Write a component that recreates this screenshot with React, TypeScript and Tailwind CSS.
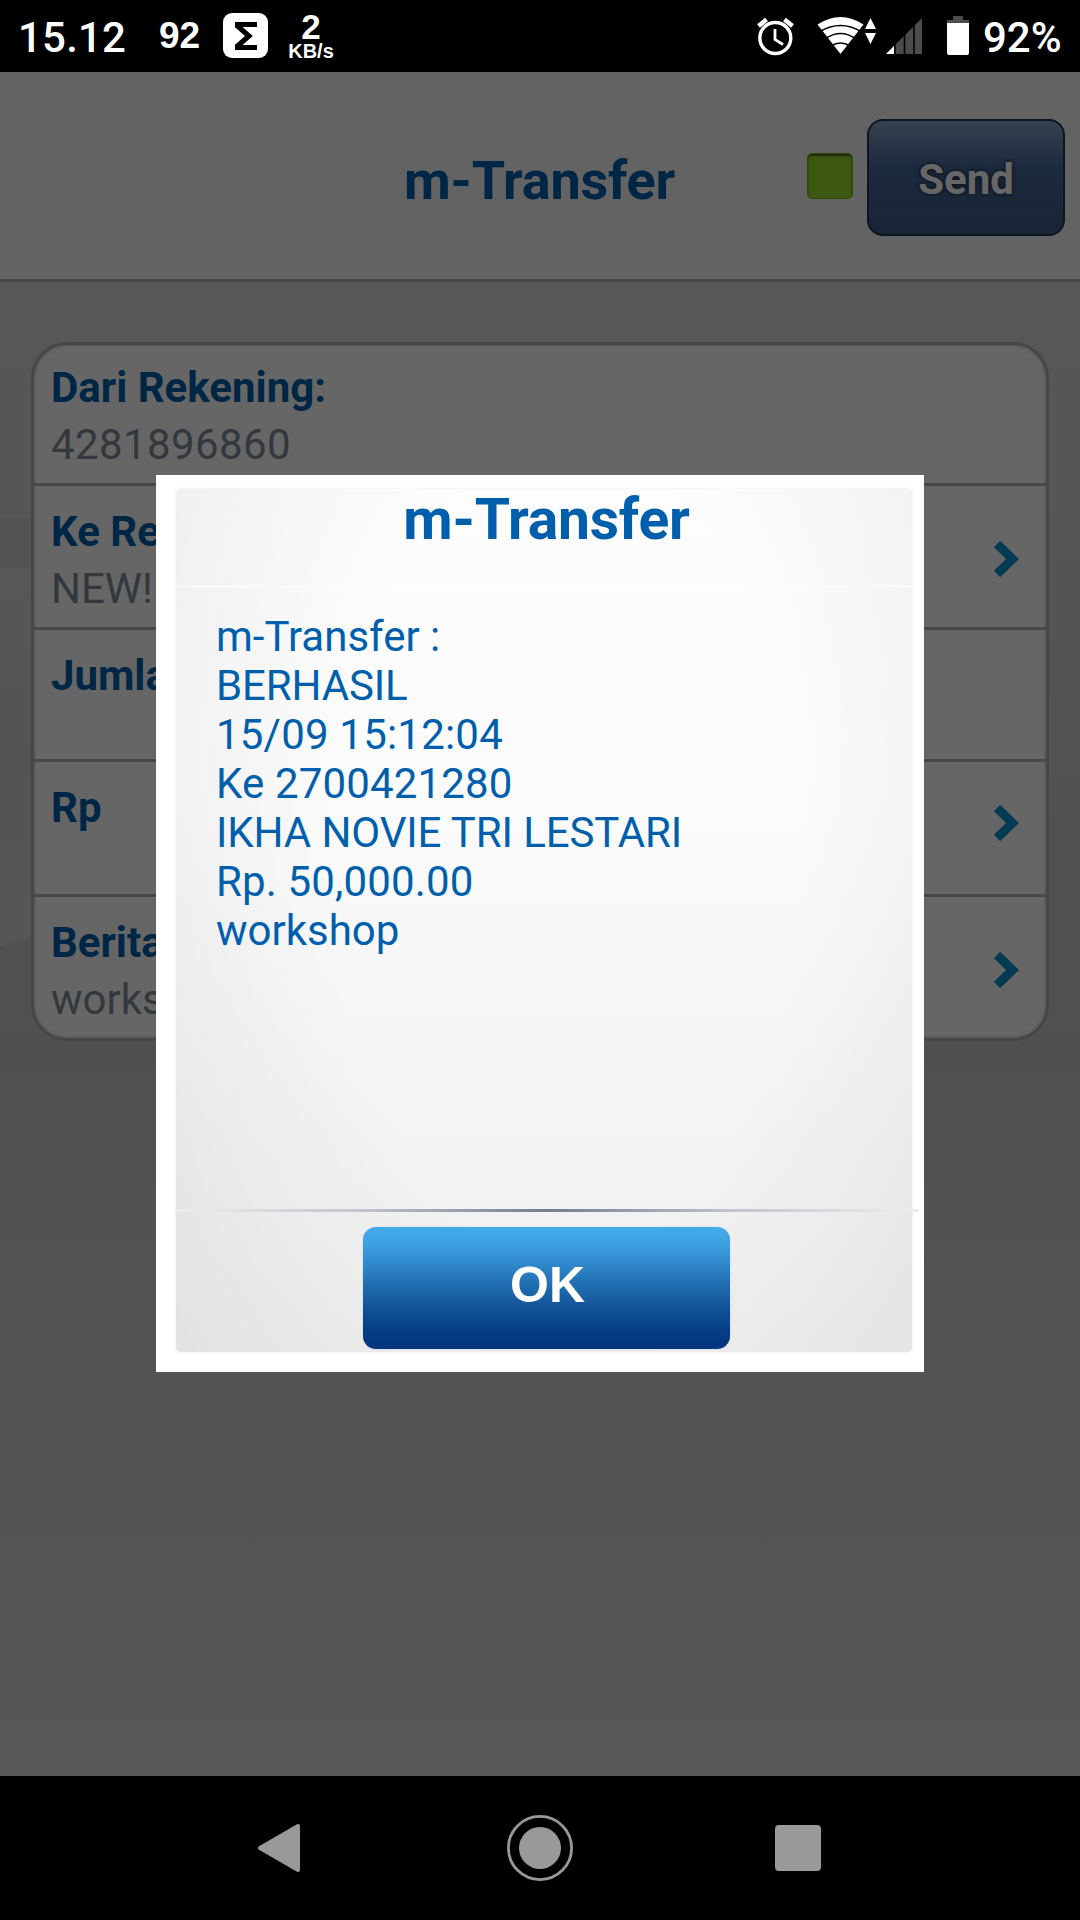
import React from "react";

type Row = { label: string; value?: string; chevron?: string; box: string };

const rows: Row[] = [
  { label: "Dari Rekening:", value: "4281896860", box: "h-[141px] pt-[14px]" },
  { label: "Ke Rekening:", value: "NEW! IKHA NOVIE", chevron: "mt-[36px]", box: "h-[144px] pt-[17px]" },
  { label: "Jumlah Uang:", box: "h-[132px] pt-[17px]" },
  { label: "Rp", chevron: "mt-[24px]", box: "h-[135px] pt-[17px]" },
  { label: "Berita:", value: "workshop", chevron: "mt-[36px]", box: "h-[141px] pt-[17px]" },
];

const receipt = [
  { text: "m-Transfer :", spacing: "tracking-[0px]" },
  { text: "BERHASIL", spacing: "tracking-[-0.15px]" },
  { text: "15/09 15:12:04", spacing: "tracking-[0.2px]" },
  { text: "Ke 2700421280", spacing: "tracking-[0.15px]" },
  { text: "IKHA NOVIE TRI LESTARI", spacing: "tracking-[-0.1px]" },
  { text: "Rp. 50,000.00", spacing: "tracking-[0.15px]" },
  { text: "workshop", spacing: "tracking-[0px]" },
];

function StatusBar() {
  return (
    <div className="flex h-[72px] shrink-0 items-start bg-black text-white">
      <div className="ml-[18px] mt-[13px] w-[141px] text-[42px] leading-[49px] font-medium tracking-[0.2px]">15.12</div>
      <div className="mt-[13px] w-[64px] font-['Liberation_Sans',sans-serif] text-[37px] leading-[46px] font-bold">92</div>
      <div className="mt-[13px] flex h-[45px] w-[45px] items-center justify-center rounded-[9px] bg-white">
        <svg width="22" height="28" viewBox="0 0 22 28">
          <path d="M22 2.5H2.5V4L14 14L2.5 24V25.5H22" fill="none" stroke="#000" strokeWidth="5" />
        </svg>
      </div>
      <div className="ml-[16px] mt-[11px] flex w-[54px] flex-col items-center font-['Liberation_Sans',sans-serif] font-bold">
        <span className="text-[35px] leading-[31px]">2</span>
        <span className="mt-[1px] text-[20px] leading-[17px]">KB/s</span>
      </div>
      <svg className="ml-auto shrink-0" width="225" height="72" viewBox="750 0 225 72">
        <g fill="none" stroke="#fff">
          <circle cx="775.3" cy="38" r="15.5" strokeWidth="3.4" />
          <path d="M775 29V39.5L783 44.5" strokeWidth="2.8" />
          <path d="M758.5 26L766.5 19.5M792.5 26L784.5 19.5" strokeWidth="4.5" />
        </g>
        <path d="M817.5 24.5Q840.500 9.500 863.500 24.5L840.5 54Z" fill="#fff" />
        <g fill="none" stroke="#000" strokeWidth="1.7">
          <path d="M820 31.500Q840.500 19.500 861 31.500" />
          <path d="M825 39Q840.500 28 856 39" />
          <path d="M831 46Q840.500 40 850 46" />
        </g>
        <path d="M865 29L870.500 18L876 29ZM865 33H876L870.500 44Z" fill="#fff" />
        <path d="M886 54L922 18V54Z" fill="#4c4c4c" />
        <path d="M886 54L894 46V54Z" fill="#fff" />
        <path d="M895 18V55M904.500 18V55M914 18V55" stroke="#000" strokeWidth="1.6" />
        <path d="M953 16H963V20H969V24H947V20H953Z" fill="#4c4c4c" />
        <path d="M947 23H969V53Q969 55 967 55H949Q947 55 947 53Z" fill="#fff" />
      </svg>
      <div className="ml-[8px] mt-[13px] w-[97px] text-[42px] leading-[49px] font-medium">92%</div>
    </div>
  );
}

function Header() {
  return (
    <header className="grid h-[210px] shrink-0 grid-cols-[1fr_270px_1fr] items-start border-b-[3px] border-[#adadad] bg-[#f8f8f8]">
      <div />
      <h1 className="mt-[77px] -ml-[1px] text-center text-[54px] leading-[64px] font-bold tracking-[-0.2px] whitespace-nowrap text-[#005fac]">m-Transfer</h1>
      <div className="flex items-start justify-end pr-[15px]">
        <span className="mt-[81px] mr-[14px] h-[46px] w-[46px] rounded-[5px] border border-[#7cac20] bg-[#96dc28] shadow-[inset_0_2px_2px_#48681a]" />
        <button className="mt-[47px] h-[117px] w-[198px] rounded-[16px] border-2 border-[#213550] bg-[linear-gradient(#84a5c6_0%,#48699b_42%,#3e5c87_100%)] pt-[3px] text-[42px] font-bold text-white [text-shadow:0_0_5px_#0c1828]">
          Send
        </button>
      </div>
    </header>
  );
}

function Backdrop() {
  return (
    <svg className="absolute inset-0" width="1080" height="1494" viewBox="0 282 1080 1494">
      <defs>
        <linearGradient id="page" x1="0" y1="282" x2="0" y2="1776" gradientUnits="userSpaceOnUse">
          <stop offset="0" stopColor="#dadada" />
          <stop offset="0.15" stopColor="#d6d6d6" />
          <stop offset="0.35" stopColor="#cacaca" />
          <stop offset="0.52" stopColor="#c6c6c6" />
          <stop offset="0.75" stopColor="#d0d0d0" />
          <stop offset="1" stopColor="#dadada" />
        </linearGradient>
        <linearGradient id="wave" x1="0" y1="568" x2="0" y2="945" gradientUnits="userSpaceOnUse">
          <stop offset="0" stopColor="#dadada" />
          <stop offset="0.5" stopColor="#d0d0d0" />
          <stop offset="1" stopColor="#d8d8d8" />
        </linearGradient>
      </defs>
      <rect x="0" y="282" width="1080" height="1494" fill="url(#page)" />
      <path d="M0 568Q300 566 500 585L300 820Q100 920 0 946Z" fill="url(#wave)" />
      <path d="M0 519H31V568H0Z" fill="#cecece" />
    </svg>
  );
}

function FormCard() {
  return (
    <section className="relative mx-[31px] mt-[60px] h-[699px] overflow-hidden rounded-[36px] border-[3px] border-[#b0b0b0] bg-white shadow-[inset_0_0_3px_1px_#d4d4d4]">
      {rows.map((row) => (
        <div key={row.label} className={`flex items-start justify-between border-b-[3px] border-[#b4b4b4] pr-[24px] pl-[17px] last:border-b-0 ${row.box}`}>
          <div className="text-[42px] leading-[57px] whitespace-nowrap">
            <div className="font-bold text-[#005fac]">{row.label}</div>
            <div className={row.chevron ? "text-[#7d8c9c]" : "tracking-[0.4px] text-[#7d8c9c]"}>{row.value}</div>
          </div>
          {row.chevron && (
            <svg className={row.chevron} width="30" height="40" viewBox="0 0 30 40">
              <path d="M5 5L20.500 20L5 35" fill="none" stroke="#0a93cc" strokeWidth="9" />
            </svg>
          )}
        </div>
      ))}
    </section>
  );
}

function ResultDialog() {
  return (
    <div role="dialog" className="flex h-[897px] w-[768px] flex-col bg-white pt-[14px] pl-[20px]">
      <div className="flex h-[863px] w-[736px] flex-col items-center rounded-[5px] bg-[radial-gradient(ellipse_70%_100%_at_53%_42%,transparent_0%,transparent_45%,rgba(0,0,0,0.045)_80%,rgba(0,0,0,0.085)_110%),linear-gradient(#fdfdfd_0%,#fbfbfb_35%,#f3f3f3_75%,#f1f1f1_100%)] shadow-[0_0_3px_#e4e4e4]">
        <h2 className="h-[96px] w-full pl-[5px] text-center text-[57px] leading-[61px] font-bold tracking-[-0.2px] text-[#005fac]">m-Transfer</h2>
        <div className="h-[3px] w-full bg-white/40" />
        <div className="h-[621px] w-full pt-[24px] pl-[40px] text-[42px] leading-[49px] text-[#005fac]">
          {receipt.map((line) => (
            <p key={line.text} className={line.spacing}>
              {line.text}
            </p>
          ))}
        </div>
        <div className="-mr-[8px] -ml-[2px] h-[3px] w-[744px] shrink-0 bg-[linear-gradient(90deg,#eeeef0_0%,#bfc4ce_25%,#747e91_50%,#bfc4ce_75%,#eeeef0_100%)]" />
        <button className="mt-[15px] ml-[4px] h-[122px] w-[367px] shrink-0 rounded-[13px] bg-[linear-gradient(#44aceb_0%,#3fa2e3_12%,#3795d8_22%,#1f69ad_50%,#0d4b92_72%,#02367f_94%,#02367f_100%)] pr-[1px] pb-[6px] pl-[4px] font-['Liberation_Sans',sans-serif] text-[50px] font-bold text-white shadow-[0_0_1px_#7aa5d0]">
          OK
        </button>
      </div>
    </div>
  );
}

function NavBar() {
  return (
    <nav className="flex h-[144px] shrink-0 items-center justify-between bg-black pr-[259px] pl-[257px]">
      <svg width="44" height="50" viewBox="0 0 44 50">
        <path d="M3 25L41 3V47Z" fill="#999" stroke="#999" strokeWidth="4" strokeLinejoin="round" />
      </svg>
      <svg className="ml-[3px]" width="66" height="66" viewBox="0 0 66 66">
        <circle cx="33" cy="33" r="31.600" fill="none" stroke="#999" strokeWidth="2.800" />
        <circle cx="33" cy="33" r="21" fill="#999" />
      </svg>
      <span className="h-[46px] w-[46px] rounded-[4px] bg-[#999]" />
    </nav>
  );
}

export default function App() {
  return (
    <div className="flex h-[1920px] w-[1080px] flex-col overflow-hidden bg-black font-[Roboto,sans-serif]">
      <StatusBar />
      <div className="relative flex h-[1704px] shrink-0 flex-col">
        <Header />
        <main className="relative h-[1494px] overflow-hidden">
          <Backdrop />
          <FormCard />
        </main>
        <div className="absolute inset-0 flex items-start justify-center bg-black/60 pt-[403px]">
          <ResultDialog />
        </div>
      </div>
      <NavBar />
    </div>
  );
}
